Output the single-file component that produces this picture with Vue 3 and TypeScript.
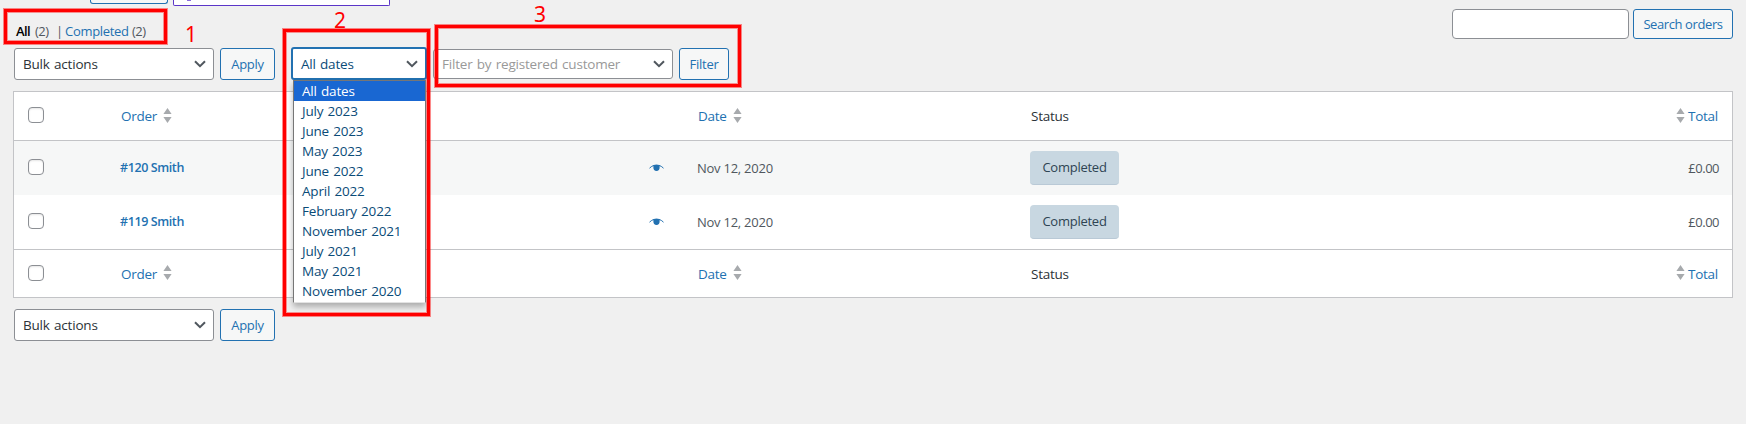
<script setup lang="ts">
interface Order {
  id: number
  customer: string
  date: string
  status: string
  total: string
}

const orders: Order[] = [
  { id: 120, customer: 'Smith', date: 'Nov 12, 2020', status: 'Completed', total: '£0.00' },
  { id: 119, customer: 'Smith', date: 'Nov 12, 2020', status: 'Completed', total: '£0.00' },
]

const dates: string[] = [
  'All dates',
  'July 2023',
  'June 2023',
  'May 2023',
  'June 2022',
  'April 2022',
  'February 2022',
  'November 2021',
  'July 2021',
  'May 2021',
  'November 2020',
]
</script>

<template>
  <div class="page">
    <div class="top-strip">
      <div class="top-button"></div>
      <div class="top-notice"><i></i></div>
    </div>

    <div class="heading">
      <div class="views">
        <b>All</b><span class="count">(2)</span><span class="sep">|</span><a>Completed</a><span class="count">(2)</span>
      </div>
      <div class="search">
        <div class="search-input"></div>
        <div class="button search-button"><span>Search orders</span></div>
      </div>
    </div>

    <div class="tablenav">
      <div class="select bulk">
        <span>Bulk actions</span>
        <svg class="chevron" viewBox="0 0 12 8"><path d="M1 1.2 6 6.2 11 1.2" /></svg>
      </div>
      <div class="button apply"><span>Apply</span></div>
      <div class="select dates">
        <span>All dates</span>
        <svg class="chevron" viewBox="0 0 12 8"><path d="M1 1.2 6 6.2 11 1.2" /></svg>
        <div class="menu">
          <div v-for="(d, i) in dates" :key="d" class="option" :class="{ active: i === 0 }">{{ d }}</div>
        </div>
      </div>
      <div class="select customer">
        <span>Filter by registered customer</span>
        <svg class="chevron" viewBox="0 0 12 8"><path d="M1 1.2 6 6.2 11 1.2" /></svg>
      </div>
      <div class="button filter"><span>Filter</span></div>
    </div>

    <div class="table">
      <div class="row head">
        <div><i class="check"></i></div>
        <div class="sortable"><span>Order</span><svg class="sort" viewBox="0 0 9 15"><path d="M4.5 0 8.6 6H.4zM4.5 15 .4 9H8.6z" /></svg></div>
        <div></div>
        <div class="sortable"><span>Date</span><svg class="sort" viewBox="0 0 9 15"><path d="M4.5 0 8.6 6H.4zM4.5 15 .4 9H8.6z" /></svg></div>
        <div class="plain"><span>Status</span></div>
        <div class="sortable end"><svg class="sort" viewBox="0 0 9 15"><path d="M4.5 0 8.6 6H.4zM4.5 15 .4 9H8.6z" /></svg><span>Total</span></div>
      </div>
      <div v-for="o in orders" :key="o.id" class="row item">
        <div><i class="check"></i></div>
        <div class="order"><span>#{{ o.id }} {{ o.customer }}</span></div>
        <div>
          <svg class="eye" viewBox="0 0 15 8">
            <path class="lid" d="M.5 4.2C3 1.7 5 1.200 7.500 1.200s4.500.5 7 3" />
            <path d="M4.400 1.200Q7.500.1 10.600 1.200V3.800a3.100 3.100 0 0 1-6.200 0z" />
          </svg>
        </div>
        <div class="date"><span>{{ o.date }}</span></div>
        <div><div class="status"><span>{{ o.status }}</span></div></div>
        <div class="total"><span>{{ o.total }}</span></div>
      </div>
      <div class="row head foot">
        <div><i class="check"></i></div>
        <div class="sortable"><span>Order</span><svg class="sort" viewBox="0 0 9 15"><path d="M4.5 0 8.6 6H.4zM4.5 15 .4 9H8.6z" /></svg></div>
        <div></div>
        <div class="sortable"><span>Date</span><svg class="sort" viewBox="0 0 9 15"><path d="M4.5 0 8.6 6H.4zM4.5 15 .4 9H8.6z" /></svg></div>
        <div class="plain"><span>Status</span></div>
        <div class="sortable end"><svg class="sort" viewBox="0 0 9 15"><path d="M4.5 0 8.6 6H.4zM4.5 15 .4 9H8.6z" /></svg><span>Total</span></div>
      </div>
    </div>

    <div class="tablenav bottom">
      <div class="select bulk">
        <span>Bulk actions</span>
        <svg class="chevron" viewBox="0 0 12 8"><path d="M1 1.2 6 6.2 11 1.2" /></svg>
      </div>
      <div class="button apply"><span>Apply</span></div>
    </div>

    <div class="mark mark-1"></div>
    <div class="mark mark-2"></div>
    <div class="mark mark-3"></div>
    <div class="num num-1">1</div>
    <div class="num num-2">2</div>
    <div class="num num-3">3</div>
  </div>
</template>

<style>
body {
  margin: 0;
  background: #f0f0f0;
}
</style>

<style scoped>
.page {
  position: relative;
  width: 1746px;
  height: 424px;
  overflow: hidden;
  background: #f0f0f0;
  font-family: 'Open Sans', 'Noto Sans', sans-serif;
  font-size: 13px;
  letter-spacing: -0.25px;
  color: #50575e;
  white-space: nowrap;
}
.page * {
  box-sizing: border-box;
}
.top-strip {
  display: flex;
  gap: 5px;
  height: 9px;
  padding-left: 90px;
}
.top-button {
  width: 78px;
  height: 4px;
  border: 1px solid #2271b1;
  border-top: 0;
  border-radius: 0 0 3px 3px;
  background: #f6f7f7;
}
.top-notice {
  width: 217px;
  height: 6px;
  padding-left: 13px;
  border: 1px solid #5b35c8;
  border-top: 0;
  border-radius: 0 0 2px 2px;
  background: #fff;
}
.top-notice i {
  display: block;
  width: 4px;
  height: 1px;
  background: #8a6bdc;
}
.heading {
  display: flex;
  justify-content: space-between;
  height: 39px;
  padding: 0 13px 0 16px;
}
.views {
  display: flex;
  height: 18px;
  margin-top: 13px;
  line-height: 18px;
}
.views b {
  width: 19px;
  font-weight: 600;
  letter-spacing: -0.6px;
  color: #000;
}
.views .count {
  width: 15px;
  letter-spacing: -0.5px;
}
.views .sep {
  width: 9px;
  margin-left: 6px;
}
.views a {
  width: 67px;
  letter-spacing: -0.3px;
  color: #2271b1;
}
.search {
  display: flex;
  gap: 4px;
}
.search-input {
  width: 177px;
  height: 30px;
  border: 1px solid #8c8f94;
  border-radius: 4px;
  background: #fff;
}
.button {
  display: flex;
  align-items: center;
  justify-content: center;
  height: 32px;
  border: 1px solid #2271b1;
  border-radius: 3px;
  background: #f6f7f7;
  color: #2271b1;
}
.search-button {
  width: 100px;
  height: 30px;
  letter-spacing: -0.4px;
}
.tablenav {
  display: flex;
  height: 43px;
  padding-left: 14px;
}
.select {
  display: flex;
  align-items: center;
  justify-content: space-between;
  height: 32px;
  padding: 0 7px 0 8px;
  border: 1px solid #8c8f94;
  border-radius: 3px;
  background: #fff;
  font-size: 13.5px;
  letter-spacing: -0.2px;
  word-spacing: 1px;
  color: #2c3338;
}
.chevron {
  width: 12px;
  height: 8px;
  fill: none;
  stroke: #50575e;
  stroke-width: 2;
}
.bulk {
  width: 200px;
  margin-right: 6px;
}
.apply {
  width: 55px;
  margin-right: 16px;
}
.dates {
  position: relative;
  width: 136px;
  height: 33px;
  margin: -1px 6px 0 0;
  border: 2px solid #2271b1;
  color: #0a4b78;
}
.menu {
  position: absolute;
  z-index: 2;
  top: 31px;
  left: 0;
  width: 133px;
  height: 223px;
  border: 1px solid #767676;
  border-bottom-color: #e3e3e3;
  background: #fff;
  box-shadow: 0 4px 6px rgba(0, 0, 0, 0.28);
}
.option {
  height: 20px;
  padding-left: 8px;
  line-height: 20px;
}
.option.active {
  background: #1967d2;
  color: #fff;
}
.customer {
  width: 240px;
  height: 30px;
  margin: 1px 6px 0 0;
  color: #999;
}
.filter {
  width: 50px;
}
.table {
  width: 1720px;
  height: 207px;
  margin-left: 13px;
  border: 1px solid #c3c4c7;
  background: #fff;
}
.row {
  display: grid;
  grid-template-columns: 106px 529px 48px 333px 400px 1fr;
  align-items: center;
  height: 54px;
  padding-right: 13px;
}
.row > div:first-child {
  padding-left: 14px;
}
.head {
  height: 49px;
  border-bottom: 1px solid #c3c4c7;
  font-size: 13.5px;
}
.foot {
  height: 48px;
  border-top: 1px solid #c3c4c7;
  border-bottom: 0;
}
.item:nth-child(2) {
  background: #f6f7f7;
}
.check {
  display: block;
  width: 16px;
  height: 16px;
  margin-top: -2px;
  border: 1px solid #8c8f94;
  border-radius: 4px;
  background: #fff;
  box-shadow: inset 0 1px 2px rgba(0, 0, 0, 0.1);
}
.sortable {
  display: flex;
  align-items: center;
  gap: 6px;
  padding-left: 1px;
  color: #2271b1;
}
.sort {
  width: 9px;
  height: 15px;
  margin-top: -2px;
  fill: #a7aaad;
}
.end {
  justify-content: flex-end;
  gap: 3px;
  padding-right: 1px;
}
.plain {
  padding-left: 1px;
  color: #2c3338;
}
.order {
  padding-bottom: 2px;
  font-size: 12.5px;
  font-weight: 600;
  letter-spacing: -0.4px;
  color: #2271b1;
}
.eye {
  display: block;
  width: 15px;
  height: 8px;
  fill: #2271b1;
}
.lid {
  fill: none;
  stroke: #2271b1;
}
.total {
  letter-spacing: -0.5px;
  text-align: right;
}
.status {
  display: flex;
  align-items: center;
  justify-content: center;
  width: 89px;
  height: 34px;
  padding-bottom: 1px;
  border-bottom: 1px solid #b9c9d6;
  border-radius: 4px;
  background: #c8d7e1;
  color: #2e4453;
}
.bottom {
  padding-top: 11px;
}
.mark {
  position: absolute;
  z-index: 3;
  border: 3px solid #f00;
  box-shadow: 0 0 0 1px rgba(255, 0, 0, 0.45), inset 0 0 0 1px rgba(255, 0, 0, 0.4);
}
.mark-1 {
  left: 4px;
  top: 9px;
  width: 163px;
  height: 35px;
}
.mark-2 {
  left: 283px;
  top: 29px;
  width: 147px;
  height: 287px;
}
.mark-3 {
  left: 435px;
  top: 25px;
  width: 306px;
  height: 62px;
}
.num {
  position: absolute;
  z-index: 3;
  font: 21px/24px 'Noto Sans', sans-serif;
  color: #f00;
}
.num-1 {
  left: 185px;
  top: 22px;
}
.num-2 {
  left: 334px;
  top: 8px;
}
.num-3 {
  left: 534px;
  top: 2px;
}
</style>
